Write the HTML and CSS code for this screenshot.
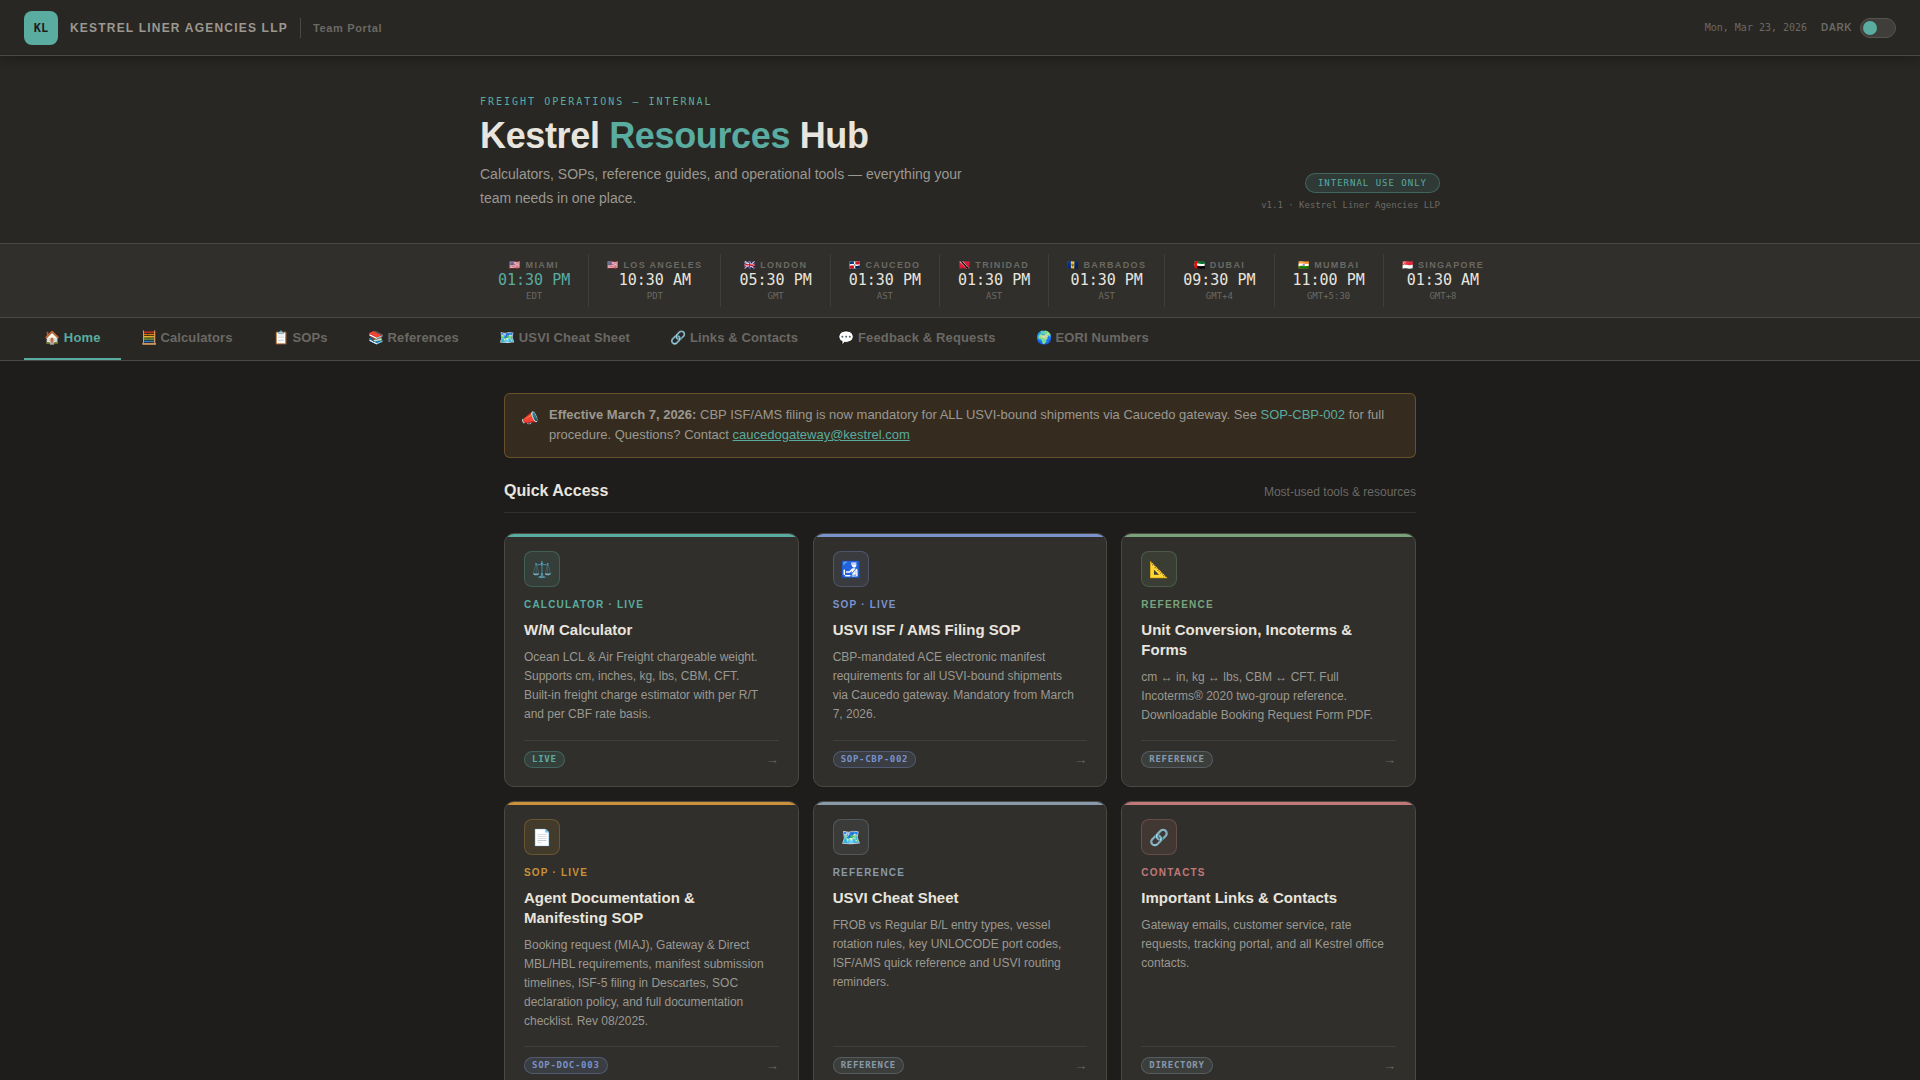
FILE: index.html
```html
<!DOCTYPE html>
<html lang="en">
<head>
  <meta charset="UTF-8" />
  <meta name="viewport" content="width=device-width, initial-scale=1.0"/>
  <title>Kestrel Resources Hub</title>
  <link rel="stylesheet" href="styles.css">
</head>
<body>

  <!-- Top bar -->
  <header class="topbar">
    <div class="brand">
      <div class="brand-logo">KL</div>
      <span class="brand-name">Kestrel Liner Agencies LLP</span>
      <span class="brand-sub">Team Portal</span>
    </div>
    <div class="topbar-right">
      <span class="today">Mon, Mar 23, 2026</span>
      <label class="theme-toggle" for="themeToggle">
        <span class="theme-label">DARK</span>
        <input type="checkbox" id="themeToggle" />
      </label>
    </div>
  </header>

  <!-- Hero -->
  <section class="hero">
    <div class="hero-inner">
      <div class="hero-text">
        <div class="eyebrow">Freight Operations — Internal</div>
        <h1>Kestrel <span>Resources</span> Hub</h1>
        <p>Calculators, SOPs, reference guides, and operational tools — everything your team needs in one place.</p>
      </div>
      <div class="hero-meta">
        <span class="pill">INTERNAL USE ONLY</span>
        <span class="version">v1.1 · Kestrel Liner Agencies LLP</span>
      </div>
    </div>
  </section>

  <!-- World clocks -->
  <section class="clocks">
    <div class="clocks-inner">
      <div class="clock home"><div class="city">🇺🇸 Miami</div><div class="time">01:30 PM</div><div class="tz">EDT</div></div>
      <div class="clock"><div class="city">🇺🇸 Los Angeles</div><div class="time">10:30 AM</div><div class="tz">PDT</div></div>
      <div class="clock"><div class="city">🇬🇧 London</div><div class="time">05:30 PM</div><div class="tz">GMT</div></div>
      <div class="clock"><div class="city">🇩🇴 Caucedo</div><div class="time">01:30 PM</div><div class="tz">AST</div></div>
      <div class="clock"><div class="city">🇹🇹 Trinidad</div><div class="time">01:30 PM</div><div class="tz">AST</div></div>
      <div class="clock"><div class="city">🇧🇧 Barbados</div><div class="time">01:30 PM</div><div class="tz">AST</div></div>
      <div class="clock"><div class="city">🇦🇪 Dubai</div><div class="time">09:30 PM</div><div class="tz">GMT+4</div></div>
      <div class="clock"><div class="city">🇮🇳 Mumbai</div><div class="time">11:00 PM</div><div class="tz">GMT+5:30</div></div>
      <div class="clock"><div class="city">🇸🇬 Singapore</div><div class="time">01:30 AM</div><div class="tz">GMT+8</div></div>
    </div>
  </section>

  <!-- Tabs -->
  <nav class="tabs">
    <button class="tab active">🏠 Home</button>
    <button class="tab">🧮 Calculators</button>
    <button class="tab">📋 SOPs</button>
    <button class="tab">📚 References</button>
    <button class="tab">🗺️ USVI Cheat Sheet</button>
    <button class="tab">🔗 Links &amp; Contacts</button>
    <button class="tab">💬 Feedback &amp; Requests</button>
    <button class="tab">🌍 EORI Numbers</button>
  </nav>

  <main class="content">
    <div class="alert">
      <span class="alert-icon">📣</span>
      <p><strong>Effective March 7, 2026:</strong> CBP ISF/AMS filing is now mandatory for ALL USVI-bound shipments via Caucedo gateway. See <a class="plain" href="#sop-cbp-002">SOP-CBP-002</a> for full procedure. Questions? Contact <a href="mailto:caucedogateway@kestrel.com">caucedogateway@kestrel.com</a></p>
    </div>

    <div class="section-head">
      <h2>Quick Access</h2>
      <span>Most-used tools &amp; resources</span>
    </div>

    <div class="cards">
      <a class="card teal" href="#wm-calculator">
        <div class="card-icon">⚖️</div>
        <div class="card-tag">Calculator · Live</div>
        <h3>W/M Calculator</h3>
        <p>Ocean LCL &amp; Air Freight chargeable weight. Supports cm, inches, kg, lbs, CBM, CFT. <span class="nowrap">Built-in</span> freight charge estimator with per R/T and per CBF rate basis.</p>
        <div class="card-foot"><span class="chip teal">LIVE</span><span class="arrow">→</span></div>
      </a>
      <a class="card blue" href="#sop-cbp-002">
        <div class="card-icon">🛃</div>
        <div class="card-tag">SOP · Live</div>
        <h3>USVI ISF / AMS Filing SOP</h3>
        <p>CBP-mandated ACE electronic manifest requirements for all USVI-bound shipments via Caucedo gateway. Mandatory from March 7, 2026.</p>
        <div class="card-foot"><span class="chip blue">SOP-CBP-002</span><span class="arrow">→</span></div>
      </a>
      <a class="card green" href="#references">
        <div class="card-icon">📐</div>
        <div class="card-tag">Reference</div>
        <h3>Unit Conversion, Incoterms &amp; Forms</h3>
        <p>cm ↔ in, kg ↔ lbs, CBM ↔ CFT. Full Incoterms® 2020 two-group reference. Downloadable Booking Request Form PDF.</p>
        <div class="card-foot"><span class="chip slate">REFERENCE</span><span class="arrow">→</span></div>
      </a>
      <a class="card amber" href="#sop-doc-003">
        <div class="card-icon">📄</div>
        <div class="card-tag">SOP · Live</div>
        <h3>Agent Documentation &amp; Manifesting SOP</h3>
        <p>Booking request (MIAJ), Gateway &amp; Direct MBL/HBL requirements, manifest submission timelines, ISF-5 filing in Descartes, SOC declaration policy, and full documentation checklist. Rev 08/2025.</p>
        <div class="card-foot"><span class="chip blue">SOP-DOC-003</span><span class="arrow">→</span></div>
      </a>
      <a class="card slate" href="#usvi">
        <div class="card-icon">🗺️</div>
        <div class="card-tag">Reference</div>
        <h3>USVI Cheat Sheet</h3>
        <p>FROB vs Regular B/L entry types, vessel rotation rules, key UNLOCODE port codes, ISF/AMS quick reference and USVI routing reminders.</p>
        <div class="card-foot"><span class="chip slate">REFERENCE</span><span class="arrow">→</span></div>
      </a>
      <a class="card rose" href="#links">
        <div class="card-icon">🔗</div>
        <div class="card-tag">Contacts</div>
        <h3>Important Links &amp; Contacts</h3>
        <p>Gateway emails, customer service, rate requests, tracking portal, and all Kestrel office contacts.</p>
        <div class="card-foot"><span class="chip slate">DIRECTORY</span><span class="arrow">→</span></div>
      </a>
    </div>
  </main>

</body>
</html>
```
FILE: styles.css
```css
:root {
  --bg: #1e1d1b;
  --surface: #282723;
  --raised: #302f2b;
  --border: #4a4944;
  --line: #3f3e3a;
  --text: #e8e4de;
  --muted: #9b9891;
  --dim: #6b6963;
  --teal: #5aaba0;
  --blue: #7b93cc;
  --green: #7aa37c;
  --amber: #c8913a;
  --slate: #8899aa;
  --rose: #c07878;
  --sans: "Liberation Sans", Arial, sans-serif;
  --mono: "DejaVu Sans Mono", monospace;
}

* {
  margin: 0;
  padding: 0;
  box-sizing: border-box;
}

body {
  background: var(--bg);
  color: var(--text);
  font-family: var(--sans);
  overflow-x: hidden;
}

/* Top bar */
.topbar {
  position: relative;
  z-index: 10;
  display: flex;
  align-items: center;
  justify-content: space-between;
  height: 56px;
  padding: 0 24px;
  background: var(--surface);
  border-bottom: 1px solid var(--border);
  box-shadow: 0 2px 12px rgba(0, 0, 0, 0.3);
}

.brand {
  display: flex;
  align-items: center;
  gap: 12px;
}

.brand-logo {
  display: flex;
  align-items: center;
  justify-content: center;
  width: 34px;
  height: 34px;
  border-radius: 8px;
  background: var(--teal);
  color: var(--bg);
  font: bold 12px var(--mono);
}

.brand-name {
  color: var(--muted);
  font-size: 12px;
  font-weight: bold;
  letter-spacing: 0.1em;
  text-transform: uppercase;
}

.brand-sub {
  padding-left: 12px;
  border-left: 1px solid var(--border);
  color: var(--dim);
  font-size: 11px;
  font-weight: bold;
  line-height: 20px;
  letter-spacing: 0.06em;
}

.topbar-right,
.theme-toggle {
  display: flex;
  align-items: center;
  gap: 14px;
}

.theme-toggle {
  gap: 8px;
  cursor: pointer;
}

.today {
  color: var(--dim);
  font: 10px var(--mono);
}

.theme-label {
  color: var(--dim);
  font-size: 10px;
  font-weight: bold;
  letter-spacing: 0.05em;
}

.theme-toggle input {
  appearance: none;
  display: flex;
  align-items: center;
  width: 36px;
  height: 20px;
  padding: 0 2px;
  border: 1px solid #55544e;
  border-radius: 10px;
  background: #3f3e3a;
  cursor: pointer;
}

.theme-toggle input::before {
  content: "";
  width: 14px;
  height: 14px;
  border-radius: 50%;
  background: var(--teal);
}

.theme-toggle input:checked {
  justify-content: flex-end;
}

/* Hero */
.hero {
  padding: 40px 0 33px;
  background: var(--surface);
  border-bottom: 1px solid var(--border);
}

.hero-inner {
  display: flex;
  align-items: flex-end;
  justify-content: space-between;
  gap: 24px;
  max-width: 960px;
  margin: 0 auto;
}

.eyebrow {
  margin-bottom: 8px;
  color: var(--teal);
  font: 10px/12px var(--mono);
  letter-spacing: 2px;
  text-transform: uppercase;
}

.hero h1 {
  margin-bottom: 6px;
  font-size: 36px;
  line-height: 40px;
  letter-spacing: -0.01em;
}

.hero h1 span {
  color: var(--teal);
}

.hero p {
  max-width: 500px;
  color: var(--muted);
  font-size: 14px;
  line-height: 24px;
}

.hero-meta {
  display: flex;
  flex-direction: column;
  align-items: flex-end;
  gap: 7px;
}

.pill {
  padding: 0 12px;
  border: 1px solid rgba(90, 171, 160, 0.4);
  border-radius: 10px;
  background: rgba(90, 171, 160, 0.14);
  color: var(--teal);
  font: 9px/18px var(--mono);
  letter-spacing: 1px;
}

.version {
  color: var(--dim);
  font: 9px/10px var(--mono);
}

/* World clocks */
.clocks {
  padding: 10px 0;
  background: var(--raised);
  border-bottom: 1px solid var(--border);
}

.clocks-inner {
  display: flex;
  max-width: 960px;
  margin: 0 auto;
}

.clock {
  flex-shrink: 0;
  padding: 4px 18px;
  border-right: 1px solid var(--line);
  text-align: center;
  white-space: nowrap;
}

.clock:last-child {
  border-right: none;
}

.city {
  color: var(--dim);
  font-size: 9px;
  font-weight: bold;
  line-height: 14px;
  letter-spacing: 0.15em;
  text-transform: uppercase;
}

.time {
  font: 15px/16px var(--mono);
}

.clock.home .time {
  color: var(--teal);
}

.tz {
  margin-top: 1px;
  color: var(--dim);
  font: 9px/14px var(--mono);
}

/* Tabs */
.tabs {
  display: flex;
  padding: 0 24px;
  background: var(--surface);
  border-bottom: 1px solid var(--border);
}

.tab {
  padding: 0 20px;
  border: none;
  border-bottom: 2px solid transparent;
  background: none;
  color: var(--dim);
  font: bold 13px/40px var(--sans);
  letter-spacing: 0.01em;
  cursor: pointer;
}

.tab:hover {
  color: var(--muted);
}

.tab.active {
  border-bottom-color: var(--teal);
  color: var(--teal);
}

/* Content */
.content {
  max-width: 960px;
  margin: 0 auto;
  padding: 32px 24px;
}

.alert {
  display: flex;
  gap: 11px;
  margin-bottom: 23px;
  padding: 11px 16px 12px;
  border: 1px solid rgba(200, 145, 58, 0.35);
  border-radius: 6px;
  background: rgba(200, 145, 58, 0.14);
}

.alert-icon {
  padding-top: 3px;
  font-size: 14px;
  line-height: 20px;
}

.alert p {
  color: var(--muted);
  font-size: 13px;
  line-height: 20px;
}

.alert a {
  color: var(--teal);
}

.alert a.plain {
  text-decoration: none;
}

.section-head {
  display: flex;
  align-items: baseline;
  justify-content: space-between;
  margin-bottom: 20px;
  padding-bottom: 11px;
  border-bottom: 1px solid #302f2b;
}

.section-head h2 {
  font-size: 16px;
  line-height: 20px;
}

.section-head span {
  color: var(--dim);
  font-size: 12px;
}

/* Cards */
.cards {
  display: grid;
  grid-template-columns: repeat(3, 1fr);
  gap: 14px;
}

.teal { --accent: var(--teal); }
.blue { --accent: var(--blue); }
.green { --accent: var(--green); }
.amber { --accent: var(--amber); }
.slate { --accent: var(--slate); }
.rose { --accent: var(--rose); }

.card {
  position: relative;
  display: flex;
  flex-direction: column;
  padding: 17px 19px 18px;
  overflow: hidden;
  border: 1px solid var(--border);
  border-radius: 10px;
  background: var(--raised);
  color: var(--text);
  text-decoration: none;
}

/* Accent strip along the top edge */
.card::before {
  content: "";
  position: absolute;
  top: 0;
  left: 0;
  right: 0;
  height: 3px;
  background: var(--accent);
}

.card-icon {
  display: flex;
  align-items: center;
  justify-content: center;
  width: 36px;
  height: 36px;
  margin-bottom: 11px;
  border: 1px solid color-mix(in srgb, var(--accent) 30%, transparent);
  border-radius: 8px;
  background: color-mix(in srgb, var(--accent) 12%, transparent);
  font-size: 16px;
}

.card-tag {
  margin-bottom: 8px;
  color: var(--accent);
  font-size: 10px;
  font-weight: bold;
  line-height: 14px;
  letter-spacing: 0.12em;
  text-transform: uppercase;
}

.card h3 {
  margin-bottom: 8px;
  font-size: 15px;
  line-height: 20px;
}

.card p {
  flex: 1;
  margin-bottom: 15px;
  padding-right: 10px;
  color: var(--muted);
  font-size: 12px;
  line-height: 19px;
}

.nowrap {
  white-space: nowrap;
}

.card-foot {
  display: flex;
  align-items: center;
  justify-content: space-between;
  padding-top: 10px;
  border-top: 1px solid var(--line);
}

.chip {
  padding: 0 7px;
  border: 1px solid color-mix(in srgb, var(--accent) 35%, transparent);
  border-radius: 9px;
  background: color-mix(in srgb, var(--accent) 14%, transparent);
  color: var(--accent);
  font: bold 9px/15px var(--mono);
  letter-spacing: 0.08em;
}

.arrow {
  color: var(--dim);
  font-size: 13px;
  line-height: 14px;
}
```
